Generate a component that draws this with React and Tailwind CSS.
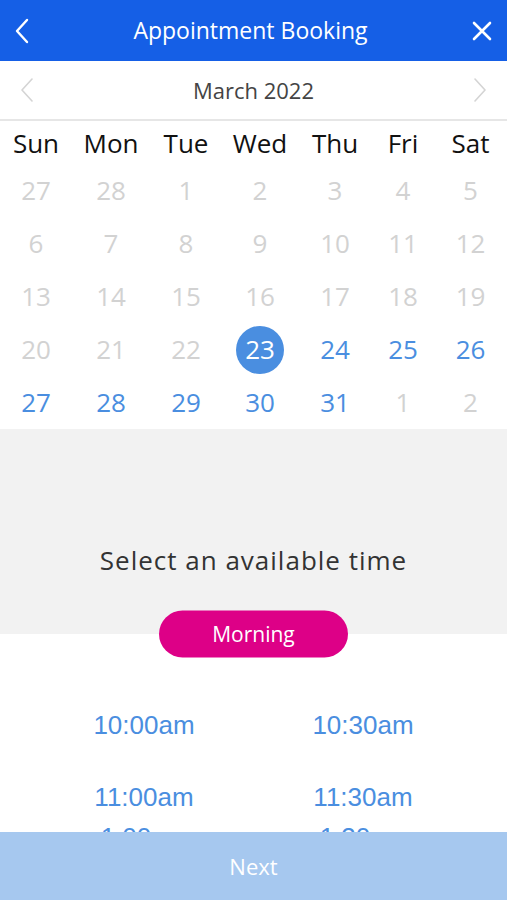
import React from "react";

const weeks = [
  [["27", 0], ["28", 0], ["1", 0], ["2", 0], ["3", 0], ["4", 0], ["5", 0]],
  [["6", 0], ["7", 0], ["8", 0], ["9", 0], ["10", 0], ["11", 0], ["12", 0]],
  [["13", 0], ["14", 0], ["15", 0], ["16", 0], ["17", 0], ["18", 0], ["19", 0]],
  [["20", 0], ["21", 0], ["22", 0], ["23", 2], ["24", 1], ["25", 1], ["26", 1]],
  [["27", 1], ["28", 1], ["29", 1], ["30", 1], ["31", 1], ["1", 0], ["2", 0]],
];

const days = ["Sun", "Mon", "Tue", "Wed", "Thu", "Fri", "Sat"];
const cols = "grid grid-cols-[72px_78px_72px_76px_74px_62px_73px]";

function Day({ label, state }) {
  if (state === 2) {
    return (
      <div className="flex items-center justify-center">
        <span className="flex h-[48px] w-[48px] items-center justify-center rounded-full bg-[#4a8ee0] text-white">
          {label}
        </span>
      </div>
    );
  }
  return (
    <div className={"flex items-center justify-center " + (state ? "text-[#4a8ee0]" : "text-[#d2d2d2]")}>
      {label}
    </div>
  );
}

export default function App() {
  return (
    <div className="flex h-[900px] w-[507px] flex-col overflow-hidden bg-white font-['Open_Sans',sans-serif]">
      {/* header */}
      <div className="flex h-[61px] shrink-0 items-center justify-between bg-[#155fe6] px-[14px] text-white">
        <svg width="16" height="26" viewBox="0 0 16 26" fill="none" stroke="white" strokeWidth="2.4" strokeLinecap="round" strokeLinejoin="round">
          <path d="M13 2 L3 13 L13 24" />
        </svg>
        <span className="text-[23px]">Appointment Booking</span>
        <svg width="22" height="22" viewBox="0 0 22 22" fill="none" stroke="white" strokeWidth="2.6" strokeLinecap="round">
          <path d="M3 3 L19 19 M19 3 L3 19" />
        </svg>
      </div>

      {/* month */}
      <div className="flex h-[60px] shrink-0 items-center justify-between border-b-2 border-[#e6e6e6] px-[20px]">
        <svg width="14" height="24" viewBox="0 0 14 24" fill="none" stroke="#d4d4d4" strokeWidth="1.6" strokeLinecap="round" strokeLinejoin="round">
          <path d="M12 1 L2 12 L12 23" />
        </svg>
        <span className="text-[22px] text-[#444]">March 2022</span>
        <svg width="14" height="24" viewBox="0 0 14 24" fill="none" stroke="#d4d4d4" strokeWidth="1.6" strokeLinecap="round" strokeLinejoin="round">
          <path d="M2 1 L12 12 L2 23" />
        </svg>
      </div>

      {/* calendar */}
      <div className="shrink-0 text-[26px]">
        <div className={cols + " h-[43px] items-center text-[#111]"}>
          {days.map((d) => (
            <div key={d} className="text-center leading-[36px]">{d}</div>
          ))}
        </div>
        {weeks.map((w, i) => (
          <div key={i} className={cols + " h-[53px]"}>
            {w.map(([l, s], j) => (
              <Day key={j} label={l} state={s} />
            ))}
          </div>
        ))}
      </div>

      {/* time heading */}
      <div className="relative z-10 flex h-[205px] shrink-0 flex-col items-center justify-end bg-[#f2f2f2]">
        <p className="mb-[11px] text-[26px] leading-[32px] tracking-[1px] text-[#333]">Select an available time</p>
        <button className="flex h-[47px] w-[189px] translate-y-1/2 items-center justify-center rounded-full bg-[#dd0087] text-[21px] text-white">
          Morning
        </button>
      </div>

      {/* times */}
      <div className="flex-1 overflow-hidden font-['Liberation_Sans',Arial,sans-serif] text-[26px] text-[#4a8ee0]">
        <div className="mx-auto mt-[76px] grid w-[438px] grid-cols-2 text-center leading-[30px]">
          <span>10:00am</span>
          <span>10:30am</span>
          <span className="mt-[42px]">11:00am</span>
          <span className="mt-[42px]">11:30am</span>
          <span className="mt-[10px]">1:00pm</span>
          <span className="mt-[10px]">1:30pm</span>
        </div>
      </div>

      {/* next */}
      <div className="flex h-[68px] shrink-0 items-center justify-center bg-[#a6c8ef] text-[22px] text-white">
        Next
      </div>
    </div>
  );
}
